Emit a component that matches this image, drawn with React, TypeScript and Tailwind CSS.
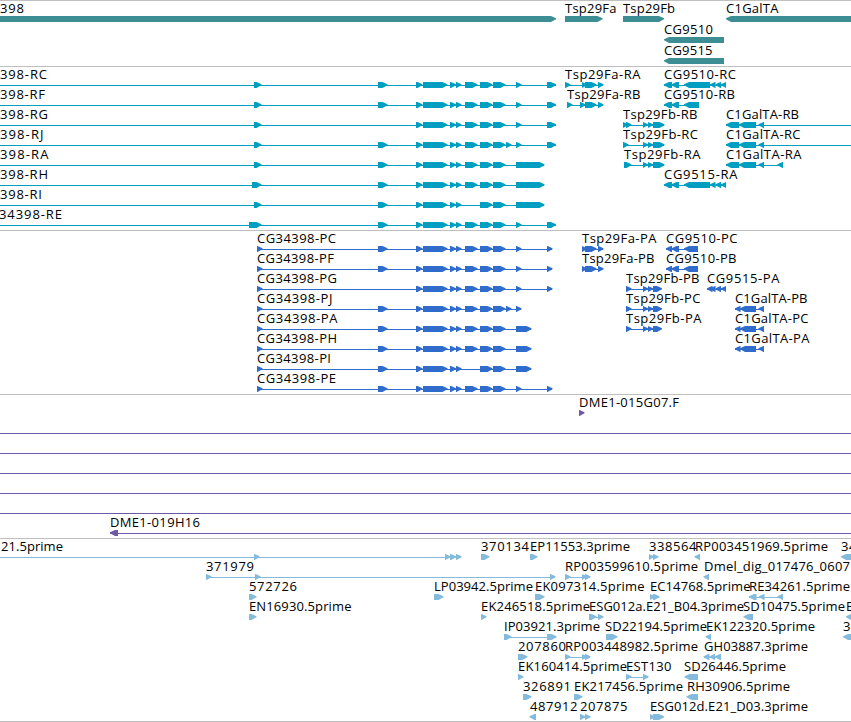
type Block = [number, number];

type Feature = {
  name?: string;
  x: number;
  labelEnd?: number;
  left?: boolean;
  blocks: Block[];
  line?: Block;
};

type TrackProps = {
  rows: Feature[][];
  color: string;
  rowHeight?: number;
  className?: string;
};

const f = (name: string, x: number, labelEnd: number, blocks: Block[], line?: Block): Feature => ({
  name, x, labelEnd, blocks, line,
});

const r = (name: string, x: number, labelEnd: number, blocks: Block[], line?: Block): Feature => ({
  name, x, labelEnd, blocks, line, left: true,
});

const plain = (): Feature[] => [{ x: 0, blocks: [], line: [0, 851] }];

// exons shared by the CG34398 transcripts and proteins
const A: Block = [378, 387.5];
const B: Block[] = [[416, 422.5], [423, 447.5], [450, 456], [456, 461.5]];
const F: Block = [465, 477.5];
const G: Block[] = [[480, 492.5], [493, 505.5]];
const H: Block = [506, 511.5];
const I: Block = [516, 521.5];
const J: Block = [547, 556];
const longI: Block = [516, 544.5];
const shortI: Block = [516, 531.5];
const endP: Block = [547, 552.5];
const startR: Block = [254, 261.5];
const startP: Block = [257, 262.5];

const faTail: Block[] = [[585, 596.5], [598, 603.5]];
const fbTail: Block[] = [[643, 648], [648, 653], [653, 664.5]];
const fbShort: Block[] = [[643, 648], [648, 653], [653, 662]];
const cgHead: Block[] = [[664, 672], [671.5, 679]];
const cgTail: Block[] = [[684, 710], [710, 715.5], [715.5, 721], [721, 726]];
const c1: Block[] = [[726, 739], [739, 756], [758.5, 764]];
const c1P: Block[] = [[735, 740.5], [740, 756], [758.5, 764]];
const rp: Block[] = [[565, 570.5], [582, 587], [585, 590.5]];

const genes: Feature[][] = [
  [
    f("398", 0, 23.5, [[-10, 556]]),
    f("Tsp29Fa", 565, 616, [[565, 602.5]]),
    f("Tsp29Fb", 623, 674.5, [[623, 664]]),
    r("C1GalTA", 726, 778, [[726, 860]]),
  ],
  [r("CG9510", 664, 712.5, [[664, 724]])],
  [r("CG9515", 664, 712, [[664, 724]])],
];

const transcripts: Feature[][] = [
  [
    f("398-RC", 0, 46.5, [startR, A, ...B, F, ...G, I, J], [0, 556]),
    f("Tsp29Fa-RA", 565, 640, [[565, 570.5], [582, 587], ...faTail]),
    r("CG9510-RC", 664, 735.5, [...cgHead, ...cgTail]),
  ],
  [
    f("398-RF", 0, 44.5, [startR, A, ...B, F, ...G, I, J], [0, 556]),
    f("Tsp29Fa-RB", 567, 640, [[567, 572.5], [580, 585.5], ...faTail]),
    r("CG9510-RB", 664, 734.5, [...cgHead, [684, 699]]),
  ],
  [
    f("398-RG", 0, 47.5, [startR, ...B, F, ...G, I, J], [0, 556]),
    f("Tsp29Fb-RB", 623, 697, [[623, 628], [626, 631.5], ...fbTail]),
    r("C1GalTA-RB", 726, 798.5, c1, [726, 851]),
  ],
  [
    f("398-RJ", 0, 43, [startR, A, ...B, F, ...G, H, I, J], [0, 556]),
    f("Tsp29Fb-RC", 623, 697.5, [[623, 628.5], ...fbTail]),
    r("C1GalTA-RC", 726, 800, c1, [726, 851]),
  ],
  [
    f("398-RA", 0, 48, [startR, A, ...B, F, ...G, longI], [0, 544]),
    f("Tsp29Fb-RA", 624, 700, [[624, 631.5], ...fbTail]),
    r("C1GalTA-RA", 726, 801, [...c1, [777.5, 783]]),
  ],
  [
    f("398-RH", 0, 47.5, [[252, 261.5], A, ...B, F, ...G, longI], [0, 544]),
    r("CG9515-RA", 664, 737, [...cgHead, ...cgTail]),
  ],
  [f("398-RI", 0, 41.5, [startR, A, ...B, ...G, longI], [0, 544])],
  [f("34398-RE", -1, 61.5, [[249, 261.5], A, ...B, F, ...G, I, J], [0, 556])],
];

const proteins: Feature[][] = [
  [
    f("CG34398-PC", 257, 335.5, [startP, A, ...B, F, ...G, I, endP]),
    f("Tsp29Fa-PA", 582, 656, [[582, 587], ...faTail]),
    r("CG9510-PC", 666, 737, [[666, 672], [671.5, 679], [684, 698]]),
  ],
  [
    f("CG34398-PF", 257, 333.5, [startP, A, ...B, F, ...G, I, endP]),
    f("Tsp29Fa-PB", 582, 654, [[582, 587], ...faTail]),
    r("CG9510-PB", 666, 736, [[666, 672], [671.5, 679], [684, 698]]),
  ],
  [
    f("CG34398-PG", 257, 336.5, [startP, ...B, F, ...G, I, endP]),
    f("Tsp29Fb-PB", 626, 699, [[626, 631.5], ...fbShort]),
    r("CG9515-PA", 707, 779, [[707, 712.5], [710, 715.5], [715.5, 721], [721, 726]]),
  ],
  [
    f("CG34398-PJ", 257, 332, [startP, A, ...B, F, ...G, H, I]),
    f("Tsp29Fb-PC", 626, 700, [[626, 631.5], ...fbShort]),
    r("C1GalTA-PB", 735, 807, c1P),
  ],
  [
    f("CG34398-PA", 257, 337, [startP, A, ...B, F, ...G, shortI]),
    f("Tsp29Fb-PA", 626, 701, [[626, 631.5], ...fbShort]),
    r("C1GalTA-PC", 735, 808, c1P),
  ],
  [
    f("CG34398-PH", 257, 336.5, [startP, A, ...B, F, ...G, shortI]),
    r("C1GalTA-PA", 735, 809, c1P),
  ],
  [f("CG34398-PI", 257, 330.5, [startP, A, ...B, ...G, shortI])],
  [f("CG34398-PE", 257, 335.5, [startP, A, ...B, F, ...G, I, endP])],
];

const clones: Feature[][] = [
  [f("DME1-015G07.F", 579, 678.5, [[579, 584.5]])],
  plain(),
  plain(),
  plain(),
  plain(),
  plain(),
  [r("DME1-019H16", 110, 199.5, [[110, 118]], [110, 851])],
];

const ests: Feature[][] = [
  [
    f("21.5prime", 1, 62.5, [[254, 259.5], [445, 450.5], [450, 456], [456, 461.5]], [0, 461]),
    f("370134", 481, 528.5, [[481, 489.5]]),
    f("EP11553.3prime", 530, 629.5, [[530, 537.5]]),
    f("338564", 649, 696, [[649, 654], [653, 658.5]]),
    r("RP003451969.5prime", 695, 827.5, [[694.5, 700]]),
    r("34", 841, 856, [[841, 856]]),
  ],
  [
    f("371979", 206, 253.5, [[206, 211.5], [255, 260.5], [550, 555.5]]),
    f("RP003599610.5prime", 565, 697.5, rp),
    r("Dmel_dig_017476_0607", 704, 849.5, [[703.5, 709]]),
  ],
  [
    f("572726", 249, 296.5, [[249, 256.5]]),
    f("LP03942.5prime", 434, 532.5, [[434, 443.5]]),
    f("EK097314.5prime", 535, 644, [[535, 544.5]]),
    f("EC14768.5prime", 650, 750, [[650, 655], [653, 659.5]]),
    r("RE34261.5prime", 749, 849.5, [[749, 756.5], [759, 764.5], [777.5, 783]]),
  ],
  [
    f("EN16930.5prime", 249, 351, [[249, 256.5]]),
    f("EK246518.5prime", 481, 589.5, [[481, 486.5]]),
    f("ESG012a.E21_B04.3prime", 589, 743.5, [[589, 596.5], [598, 603.5]]),
    r("SD10475.5prime", 743, 844.5, [[743.5, 753]]),
    r("E", 846, 853, [[846, 860]]),
  ],
  [
    f("IP03921.3prime", 504, 599.5, [[504, 511.5], [547, 556.5]]),
    f("SD22194.5prime", 605, 706.5, [[606, 617.5]]),
    r("EK122320.5prime", 706, 814.5, [[705.5, 711]]),
    r("3", 843, 850.5, [[843, 858]]),
  ],
  [
    f("207860", 518, 565.5, [[518, 527.5]]),
    f("RP003448982.5prime", 565, 697.5, rp),
    r("GH03887.3prime", 704, 807.5, [[703.5, 709.5], [709.5, 715], [715, 721]]),
  ],
  [
    f("EK160414.5prime", 518, 626.5, [[518, 523.5]]),
    f("EST130", 626, 671, [[626, 631.5], [643, 648.5]]),
    r("SD26446.5prime", 684, 785.5, [[684.5, 698]]),
  ],
  [
    f("326891", 523, 570.5, [[523, 531.5]]),
    f("EK217456.5prime", 574, 682.5, [[574, 582.5]]),
    r("RH30906.5prime", 687, 789.5, [[686.5, 698]]),
  ],
  [
    r("487912", 530, 577, [[529.5, 536]]),
    f("207875", 580, 627, [[580, 585.5], [585, 590.5]]),
    f("ESG012d.E21_D03.3prime", 650, 807.5, [[650, 655], [653, 664]]),
  ],
];

function arrow([s, e]: Block, left?: boolean) {
  const head = Math.min(e - s, 5);
  if (left) {
    return `${e},15 ${s + head},15 ${s},17.3 ${s},18.2 ${s + head},21 ${e},21`;
  }
  return `${s},15 ${e - head},15 ${e},17.3 ${e},18.2 ${e - head},21 ${s},21`;
}

function Glyph({ feature }: { feature: Feature }) {
  const { name, x, labelEnd = x, left, blocks, line } = feature;
  const [start, end] = line ?? [blocks[0][0], blocks[blocks.length - 1][1] - 1];
  return (
    <g>
      {(line || blocks.length > 1) && <rect x={start} y={18} width={end - start} height={1} shapeRendering="crispEdges" />}
      {blocks.map((block, i) => (
        <polygon key={i} points={arrow(block, left)} />
      ))}
      {name && (
        <text x={x} y={12} textLength={labelEnd - x + 0.5} className="fill-black">
          {name}
        </text>
      )}
    </g>
  );
}

function Track({ rows, color, rowHeight = 20, className = "" }: TrackProps) {
  return (
    <section className={`border-t border-[#bfbfbf] ${color} ${className}`}>
      {rows.map((row, i) => (
        <svg key={i} width={851} height={rowHeight} className="block overflow-visible fill-current">
          {row.map((feature, j) => (
            <Glyph key={j} feature={feature} />
          ))}
        </svg>
      ))}
    </section>
  );
}

function App() {
  return (
    <main className="w-[851px] h-[722px] overflow-hidden bg-white text-[13px] font-['Open_Sans','DejaVu_Sans',sans-serif]">
      <Track rows={genes} color="text-[#3d8e94]" rowHeight={21} className="pb-0.5" />
      <Track rows={transcripts} color="text-[#009fc1]" className="pb-[3px]" />
      <Track rows={proteins} color="text-[#306ccb]" className="pb-[3px]" />
      <Track rows={clones} color="text-[#7058a8]" className="pb-[3px]" />
      <Track rows={ests} color="text-[#84bbdd]" className="border-b pb-0.5" />
    </main>
  );
}

export default App;
